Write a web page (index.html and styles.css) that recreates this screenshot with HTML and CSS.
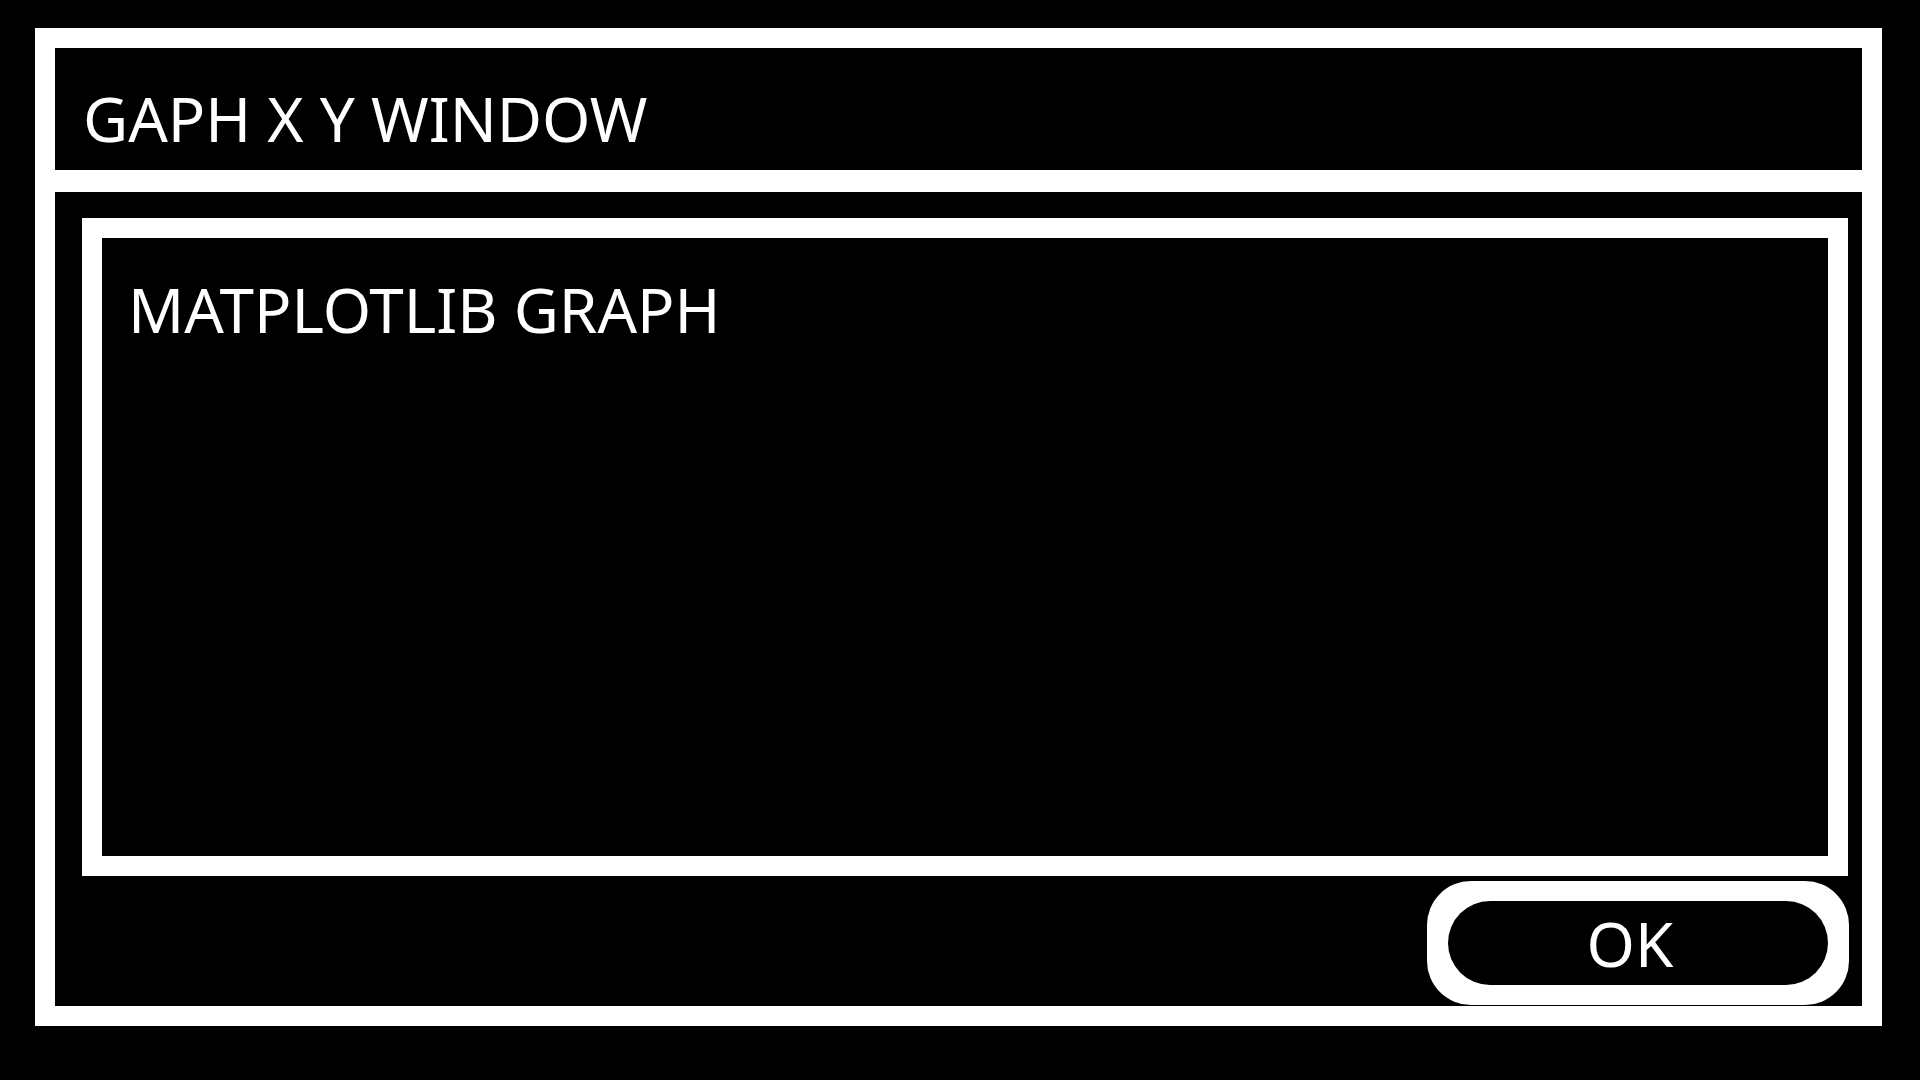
FILE: index.html
```html
<!DOCTYPE html>
<html lang="en">
<head>
  <meta charset="UTF-8" />
  <meta name="viewport" content="width=device-width, initial-scale=1.0" />
  <title>GAPH X Y WINDOW</title>
  <link rel="stylesheet" href="styles.css">
</head>
<body>
  <div class="window">
    <div class="title-bar">
      <h1>GAPH X Y WINDOW</h1>
    </div>

    <div class="main">
      <div class="graph-frame">
        <div class="graph-area">
          <p>MATPLOTLIB GRAPH</p>
        </div>
      </div>

      <div class="footer">
        <div class="ok-ring">
          <button type="button" class="ok-btn">OK</button>
        </div>
      </div>
    </div>
  </div>
</body>
</html>
```

FILE: styles.css
```css
body {
  margin: 0;
  padding: 28px 38px 54px 35px;
  background-color: #000;
  font-family: "Noto Sans", "Open Sans", sans-serif;
  color: #fff;
}
.window {
  display: flex;
  flex-direction: column;
  gap: 22px;
  height: 958px;
  padding: 20px;
  background: #fff;
}
.title-bar {
  height: 122px;
  box-sizing: border-box;
  padding: 28px 28px 0;
  background: #000;
}
h1 {
  margin: 0;
  font-size: 62px;
  font-weight: normal;
  line-height: 84px;
}
.main {
  flex: 1;
  display: flex;
  flex-direction: column;
  gap: 5px;
  padding: 26px 14px 1px 27px;
  background: #000;
}
.graph-frame {
  flex: 1;
  display: flex;
  padding: 20px;
  background: #fff;
}
.graph-area {
  flex: 1;
  padding: 29px 26px;
  background: #000;
}
.graph-area p {
  margin: 0;
  font-size: 62px;
  line-height: 84px;
}
.footer {
  display: flex;
  justify-content: flex-end;
  margin-right: -1px;
}
.ok-ring {
  padding: 20px 21px;
  background: #fff;
  border-radius: 44px;
}
.ok-btn {
  display: block;
  width: 380px;
  height: 84px;
  padding: 0 16px 0 0;
  border: none;
  border-radius: 42px;
  background: #000;
  color: #fff;
  font-family: "Noto Sans", "Open Sans", sans-serif;
  font-size: 62px;
  line-height: 84px;
  cursor: pointer;
}
```
